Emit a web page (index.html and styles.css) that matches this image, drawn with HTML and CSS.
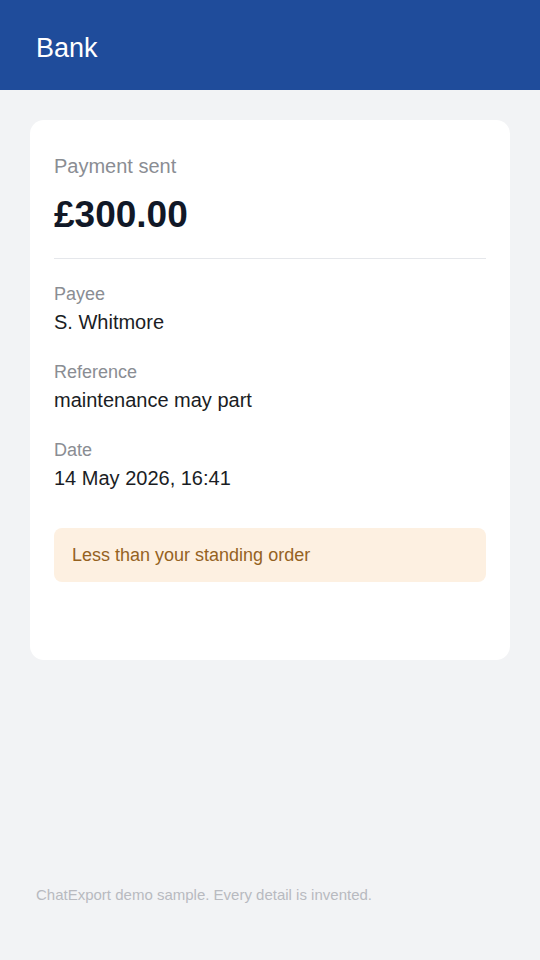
FILE: index.html
```html
<!DOCTYPE html>
<html lang="en">
<head>
  <meta charset="UTF-8" />
  <title>Bank – Payment sent</title>
  <link rel="stylesheet" href="styles.css">
</head>
<body>
  <div class="app">
    <header class="topbar">
      <h1 class="topbar-title">Bank</h1>
    </header>

    <main class="content">
      <section class="card">
        <div class="card-title">Payment sent</div>
        <div class="amount">£300.00</div>
        <hr class="divider">

        <div class="field">
          <div class="field-label">Payee</div>
          <div class="field-value">S. Whitmore</div>
        </div>
        <div class="field">
          <div class="field-label">Reference</div>
          <div class="field-value">maintenance may part</div>
        </div>
        <div class="field">
          <div class="field-label">Date</div>
          <div class="field-value">14 May 2026, 16:41</div>
        </div>

        <div class="notice">Less than your standing order</div>
      </section>
    </main>

    <footer class="footer">ChatExport demo sample. Every detail is invented.</footer>
  </div>
</body>
</html>
```

FILE: styles.css
```css
:root {
  --brand: #1f4c9b;
  --bg: #f2f3f5;
  --card: #fff;
  --text: #1a1d24;
  --heading: #111827;
  --muted: #8a8d93;
  --faint: #b8bac0;
  --line: #e5e7eb;
  --warn-bg: #fdf0e1;
  --warn-text: #95621f;
}

* { margin: 0; padding: 0; box-sizing: border-box; }
html, body {
  width: 100%;
  height: 100%;
  background: var(--bg);
  font-family: 'Liberation Sans', Arial, sans-serif;
}

.app {
  min-height: 100vh;
  display: flex;
  flex-direction: column;
}

.topbar {
  height: 90px;
  background: var(--brand);
  display: flex;
  align-items: center;
  padding: 0 36px;
}

.topbar-title {
  font-size: 27px;
  font-weight: 400;
  color: #fff;
  line-height: 1;
  margin-top: 6px;
}

.content {
  flex: 1;
  padding: 30px;
}

.card {
  background: var(--card);
  border-radius: 14px;
  padding: 34px 24px 78px;
}

.card-title {
  font-size: 20px;
  line-height: 24px;
  color: var(--muted);
}

.amount {
  margin-top: 15px;
  font-size: 37px;
  line-height: 44px;
  font-weight: 700;
  color: var(--heading);
}

.divider {
  border: none;
  border-top: 1px solid var(--line);
  margin: 21px 0 24px;
}

.field + .field { margin-top: 26px; }

.field-label {
  font-size: 18px;
  line-height: 22px;
  color: var(--muted);
}

.field-value {
  margin-top: 4px;
  font-size: 20px;
  line-height: 26px;
  color: var(--text);
}

.notice {
  margin-top: 37px;
  height: 54px;
  display: flex;
  align-items: center;
  padding: 0 18px;
  background: var(--warn-bg);
  border-radius: 8px;
  font-size: 18px;
  color: var(--warn-text);
}

.footer {
  padding: 0 36px 56px;
  font-size: 15px;
  line-height: 18px;
  color: var(--faint);
}
```
